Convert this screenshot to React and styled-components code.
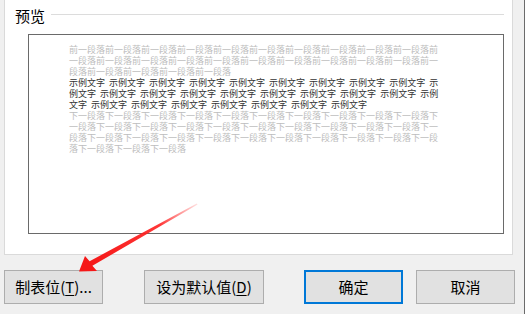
import styled, { createGlobalStyle } from 'styled-components'

//! Content
const before = '前一段落'.repeat(25)
const sample = Array(26).fill('示例文字').join(' ')
const after = '下一段落'.repeat(34)

const buttons = [
    { label: '制表位(', key: 'T', tail: ')...', width: 99, gap: 0 },
    { label: '设为默认值(', key: 'D', tail: ')', width: 120, gap: 41 },
    { label: '确定', width: 99, gap: 40, primary: true },
    { label: '取消', width: 99, gap: 13 }
]

//! Styles
const Global = createGlobalStyle`
    html, body {
        margin: 0;
        padding: 0;
        background: #f0f0f0;
        overflow: hidden;
    }
    body {
        font-family: "Noto Sans CJK SC", "Noto Sans", sans-serif;
    }
`

const Dialog = styled.div`
    position: relative;
    width: 525px;
    height: 314px;
    box-sizing: border-box;
    border-right: 1px solid #6b6b6b;
    background: #f0f0f0;
`

const Panel = styled.section`
    margin-left: 4px;
    width: 509px;
    height: 255px;
    box-sizing: border-box;
    background: #ffffff;
    border: 1px solid #dadada;
    border-top: none;
`

const Legend = styled.div`
    display: flex;
    padding: 8px 8px 0 10px;
    height: 15px;
`

const LegendText = styled.span`
    font-size: 15px;
    line-height: 15px;
    color: #000;
`

const Rule = styled.div`
    flex: 1;
    height: 1px;
    margin: 6px 0 0 6px;
    background: #dcdcdc;
`

const PreviewBox = styled.div`
    margin: 11px 0 0 23px;
    width: 476px;
    height: 200px;
    box-sizing: border-box;
    border: 1px solid #6a6a6a;
    padding: 9px 0 0 40px;
`

const Lines = styled.div`
    width: 372px;
    font-size: 9px;
    line-height: 11px;
    word-break: break-all;
`

const Para = styled.div`
    color: ${({ $muted }) => ($muted ? '#bdbdbd' : '#333333')};
    word-spacing: 2px;
`

const ButtonRow = styled.div`
    display: flex;
    margin-top: 15px;
    padding-left: 4px;
`

const Button = styled.button`
    width: ${({ $w }) => $w}px;
    height: 34px;
    margin-left: ${({ $gap }) => $gap}px;
    padding: 0;
    box-sizing: border-box;
    background: #e1e1e1;
    border: ${({ $primary }) =>
        $primary ? '2px solid #0078d7' : '1px solid #adadad'};
    font-family: "Noto Sans CJK SC", "Noto Sans", sans-serif;
    font-size: 15px;
    line-height: 20px;
    color: #000;
    u {
        text-decoration-thickness: 1px;
        text-underline-offset: 2px;
    }
`

const Annotation = styled.svg`
    position: absolute;
    top: 0;
    left: 0;
    pointer-events: none;
`

//! Components
const Arrow = () => (
    <Annotation width="525" height="314" viewBox="0 0 525 314">
        <defs>
            <linearGradient id="fade" x1="197" y1="204" x2="90" y2="264" gradientUnits="userSpaceOnUse">
                <stop offset="0" stopColor="#ff3030" stopOpacity="0.15" />
                <stop offset="0.35" stopColor="#ff2020" stopOpacity="0.9" />
                <stop offset="1" stopColor="#f51818" />
            </linearGradient>
        </defs>
        <polygon
            points="79,271.5 97,271 92.4,265.8 197.6,204.4 196.8,203.6 89.6,261.2 85,256"
            fill="url(#fade)"
        />
    </Annotation>
)

//? EXPORT
const App = () => (
    <Dialog>
        <Global />
        <Panel>
            <Legend>
                <LegendText>预览</LegendText>
                <Rule />
            </Legend>
            <PreviewBox>
                <Lines>
                    <Para $muted>{before}</Para>
                    <Para>{sample}</Para>
                    <Para $muted>{after}</Para>
                </Lines>
            </PreviewBox>
        </Panel>
        <ButtonRow>
            {buttons.map((b) => (
                <Button key={b.label} $w={b.width} $gap={b.gap} $primary={b.primary}>
                    {b.label}
                    {b.key && <u>{b.key}</u>}
                    {b.tail}
                </Button>
            ))}
        </ButtonRow>
        <Arrow />
    </Dialog>
)

export default App
